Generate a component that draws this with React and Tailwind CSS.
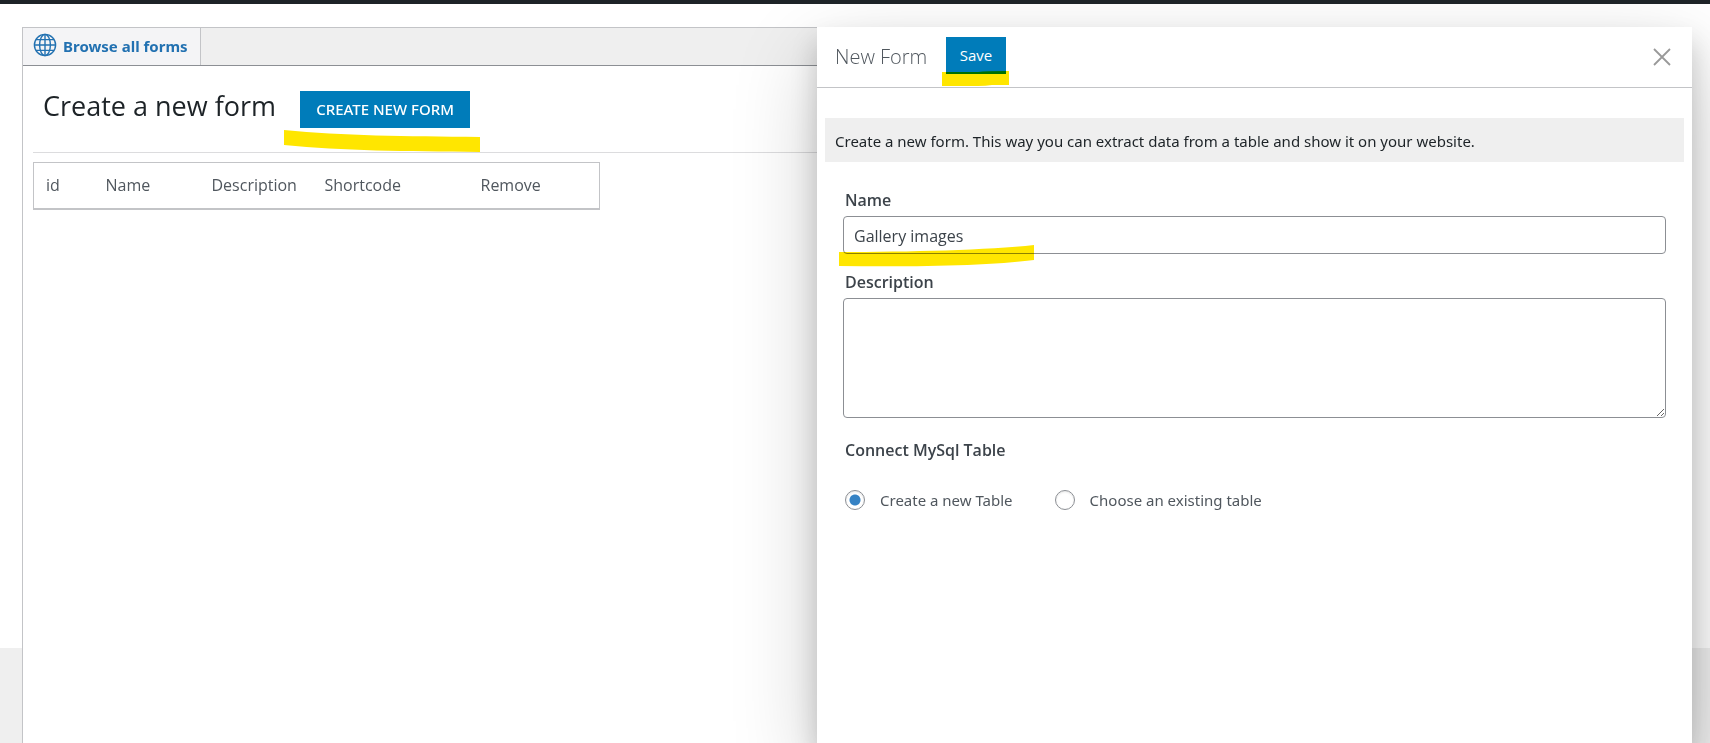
import React, { useState } from "react";

function GlobeIcon() {
  return (
    <svg viewBox="0 0 24 24" className="mb-1 size-6 shrink-0" fill="none" stroke="#2271b1" strokeWidth="1.4" aria-hidden="true">
      <circle cx="12" cy="12" r="10.6" />
      <ellipse cx="12" cy="12" rx="5.4" ry="10.6" />
      <path d="M12 1.4v21.2M1.4 12h21.2M3 6.6h18M3 17.4h18" />
    </svg>
  );
}

function Tabs() {
  return (
    <nav className="flex border-b border-[#8c8f94] bg-[#efefef]">
      <a href="#forms" className="flex h-[37px] items-center gap-1.5 border-r border-[#c3c4c7] bg-[#f4f4f6] pr-3 pl-2.5 font-['Noto_Sans',sans-serif] text-[15px] font-bold text-[#2271b1]">
        <GlobeIcon />
        Browse all forms
      </a>
    </nav>
  );
}

function FormsTable() {
  return (
    <table className="w-[567px] table-fixed border border-b-2 border-[#c3c4c7] text-left text-[16px] text-[#50575e]">
      <thead>
        <tr className="h-[46px]">
          <th scope="col" className="w-[60px] pl-3 font-normal">id</th>
          <th scope="col" className="w-[106px] pl-3 font-normal">Name</th>
          <th scope="col" className="w-[113px] pl-3 font-normal">Description</th>
          <th scope="col" className="w-[156px] pl-3 font-normal">Shortcode</th>
          <th scope="col" className="pl-3 font-normal">Remove</th>
        </tr>
      </thead>
    </table>
  );
}

function Drawer() {
  const [name, setName] = useState("Gallery images");
  const [source, setSource] = useState("new");
  const radio =
    "size-5 shrink-0 appearance-none rounded-full border border-[#8c8f94] bg-white shadow-[inset_0_1px_2px_rgba(0,0,0,0.1)] checked:bg-[radial-gradient(circle,#3582c4_5px,transparent_6px)]";
  const label = "text-[16px] leading-6 font-semibold text-[#3c434a]";
  return (
    <aside className="absolute top-[23px] right-[18px] bottom-0 w-[875px] bg-white shadow-[0_15px_25px_rgba(0,0,0,0.18),0_30px_80px_rgba(0,0,0,0.2)]">
      <header className="flex h-[61px] items-center border-b border-[#c3c4c7] pr-5 pl-[18px]">
        <h2 className="w-[111px] text-[20px] font-light text-[#50575e]">New Form</h2>
        <div className="relative mb-1">
          <button type="button" className="block h-[37px] w-[60px] bg-[#007cba] text-[15px] font-medium text-white">Save</button>
          <svg className="pointer-events-none absolute top-[33px] -left-1 h-[17px] w-[68px] mix-blend-multiply" viewBox="0 0 68 17" aria-hidden="true">
            <path d="M0 2 L36 2 Q44 1 67 1 L67 15 L50 15 Q44 16 36 16 L0 16Z" fill="#ffe600" />
          </svg>
        </div>
        <button type="button" aria-label="Close" className="ml-auto flex size-5 items-center justify-center">
          <svg viewBox="0 0 20 20" className="size-5" fill="none" stroke="#999" strokeWidth="1.8" aria-hidden="true">
            <path d="M2 2l16 16M18 2L2 18" />
          </svg>
        </button>
      </header>
      <p className="mx-2 mt-[30px] flex h-11 items-center bg-[#efefef] px-2.5 pt-[2px] font-['Noto_Sans',sans-serif] text-[15px] text-[#1d2327]">
        Create a new form. This way you can extract data from a table and show it on your website.
      </p>
      <form className="flex flex-col px-[26px] pt-[26px]">
        <label htmlFor="name" className={label + " px-[2px]"}>Name</label>
        <div className="relative mt-1">
          <input id="name" value={name} onChange={(e) => setName(e.target.value)} className="block h-[38px] w-full rounded-[4px] border border-[#8c8f94] bg-white px-2.5 pt-[2px] text-[16px] text-[#3c434a]" />
          <svg className="pointer-events-none absolute top-[28px] -left-1 h-[24px] w-[196px] mix-blend-multiply" viewBox="0 0 196 24" aria-hidden="true">
            <path d="M0 8 C70 8 150 6 195 1 L195 16 C150 22 70 23 0 22Z" fill="#ffe600" />
          </svg>
        </div>
        <label htmlFor="description" className={label + " mt-4 px-[2px]"}>Description</label>
        <textarea id="description" className="mt-1 block h-[120px] w-full resize rounded-[4px] border border-[#8c8f94] bg-white px-2.5 text-[16px]" />
        <fieldset className="mt-5 px-[2px]">
          <legend className={label}>Connect MySql Table</legend>
          <div className="mt-[27px] flex gap-[42px] font-['Noto_Sans',sans-serif] text-[15px] text-[#50575e]">
            <label className="flex items-center gap-[15px]">
              <input type="radio" name="source" className={radio} checked={source === "new"} onChange={() => setSource("new")} />
              Create a new Table
            </label>
            <label className="flex items-center gap-[15px]">
              <input type="radio" name="source" className={radio} checked={source === "existing"} onChange={() => setSource("existing")} />
              Choose an existing table
            </label>
          </div>
        </fieldset>
      </form>
    </aside>
  );
}

export default function App() {
  return (
    <div className="relative flex min-h-screen flex-col overflow-hidden border-t-4 border-[#1d2327] bg-[linear-gradient(#fff_644px,#efefef_644px)] font-['Open_Sans','Noto_Sans',sans-serif]">
      <main className="mr-6 ml-[22px] mt-[23px] flex-1 border border-b-0 border-[#c3c4c7] bg-white">
        <Tabs />
        <div className="px-2.5">
          <div className="mb-[9px] flex h-[87px] items-start border-b border-[#dcdcde] px-2.5 pt-[25px]">
            <h1 className="mr-6 text-[27px] leading-[30px] text-[#1d2327]">Create a new form</h1>
            <div className="relative">
              <button type="button" className="block h-[37px] w-[170px] bg-[#007cba] font-['Noto_Sans',sans-serif] text-[15px] font-medium whitespace-nowrap text-white">CREATE NEW FORM</button>
              <svg className="pointer-events-none absolute top-[38px] -left-4 h-[24px] w-[197px] mix-blend-multiply" viewBox="0 0 197 24" aria-hidden="true">
                <path d="M0 1 C60 7 120 7 196 8 L196 23 C120 22 60 22 0 16Z" fill="#ffe600" />
              </svg>
            </div>
          </div>
          <FormsTable />
        </div>
      </main>
      <Drawer />
    </div>
  );
}
